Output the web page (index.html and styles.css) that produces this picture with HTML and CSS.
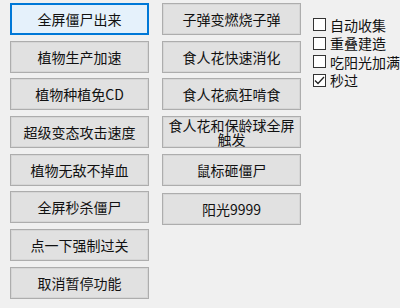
FILE: index.html
```html
<!DOCTYPE html>
<html lang="zh-CN">
<head>
    <meta charset="UTF-8">
    <meta name="viewport" content="width=device-width, initial-scale=1.0">
    <title>植物大战僵尸修改器</title>
    <link rel="stylesheet" href="styles.css">
</head>
<body>
    <div id="panel">
        <div class="column">
            <button class="btn focused">全屏僵尸出来</button>
            <button class="btn">植物生产加速</button>
            <button class="btn">植物种植免CD</button>
            <button class="btn">超级变态攻击速度</button>
            <button class="btn">植物无敌不掉血</button>
            <button class="btn">全屏秒杀僵尸</button>
            <button class="btn">点一下强制过关</button>
            <button class="btn">取消暂停功能</button>
        </div>
        <div class="column second">
            <button class="btn">子弹变燃烧子弹</button>
            <button class="btn">食人花快速消化</button>
            <button class="btn">食人花疯狂啃食</button>
            <button class="btn two-line">食人花和保龄球全屏触发</button>
            <button class="btn">鼠标砸僵尸</button>
            <button class="btn last">阳光9999</button>
        </div>
        <div class="options">
            <label class="option"><span class="box"></span>自动收集</label>
            <label class="option"><span class="box"></span>重叠建造</label>
            <label class="option"><span class="box"></span>吃阳光加满</label>
            <label class="option">
                <span class="box">
                    <svg width="11" height="11" viewBox="0 0 11 11">
                        <path d="M1 5.5 L4 8.5 L10 2" fill="none" stroke="#222" stroke-width="1.3"/>
                    </svg>
                </span>秒过
            </label>
        </div>
    </div>
</body>
</html>
```

FILE: styles.css
```css
body {
    margin: 0;
    background-color: #f0f0f0;
    font-family: "Noto Sans CJK SC", "Microsoft YaHei", sans-serif;
    overflow: hidden;
}
#panel {
    display: flex;
    padding: 3px 0 0 10px;
    width: 390px;
    height: 305px;
}
.column {
    display: flex;
    flex-direction: column;
    gap: 5.67px;
    width: 139px;
}
.column.second {
    margin-left: 13px;
}
.btn {
    height: 32px;
    padding: 0;
    background-color: #e1e1e1;
    border: 1px solid #adadad;
    box-shadow: inset 0 0 0 1px #d6d6d6;
    font-family: inherit;
    font-size: 14px;
    color: #111;
    line-height: 14px;
}
.btn.focused {
    background-color: #e5f1fb;
    border: 2px solid #0078d7;
    box-shadow: none;
}
.btn.two-line {
    line-height: 14px;
    padding: 0 3px;
}
.btn.last {
    margin-top: 2px;
}
.options {
    display: flex;
    flex-direction: column;
    gap: 5.5px;
    margin-left: 12px;
    padding-top: 15px;
    white-space: nowrap;
}
.option {
    display: flex;
    align-items: center;
    height: 13px;
    font-size: 14px;
    color: #111;
}
.box {
    display: flex;
    align-items: center;
    justify-content: center;
    width: 11px;
    height: 11px;
    margin-right: 4px;
    background-color: #fff;
    border: 1px solid #333;
}
```
